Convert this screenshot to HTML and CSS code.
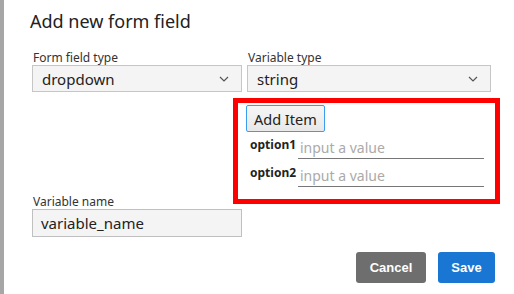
FILE: index.html
```html
<!DOCTYPE html>
<html lang="en">
<head>
  <meta charset="UTF-8">
  <title>Add new form field</title>
  <link rel="stylesheet" href="styles.css">
</head>
<body>
  <div class="dialog">
    <h2 class="title">Add new form field</h2>

    <div class="field-row">
      <div class="field">
        <label class="field-label">Form field type</label>
        <div class="select">
          <span>dropdown</span>
          <svg class="chevron" width="10" height="6" viewBox="0 0 10 6"><path d="M1 1l4 4 4-4" fill="none" stroke="#555" stroke-width="1.2"/></svg>
        </div>
      </div>
      <div class="field">
        <label class="field-label">Variable type</label>
        <div class="select">
          <span>string</span>
          <svg class="chevron" width="10" height="6" viewBox="0 0 10 6"><path d="M1 1l4 4 4-4" fill="none" stroke="#555" stroke-width="1.2"/></svg>
        </div>
      </div>
    </div>

    <div class="items-box">
      <button class="add-btn">Add Item</button>
      <div class="option">
        <span class="option-name">option1</span>
        <input class="option-input" type="text" placeholder="input a value">
      </div>
      <div class="option">
        <span class="option-name">option2</span>
        <input class="option-input" type="text" placeholder="input a value">
      </div>
    </div>

    <div class="field name-field">
      <label class="field-label">Variable name</label>
      <div class="text-input">variable_name</div>
    </div>

    <div class="actions">
      <button class="btn cancel-btn">Cancel</button>
      <button class="btn save-btn">Save</button>
    </div>
  </div>
</body>
</html>
```

FILE: styles.css
```css
body {
  margin: 0;
  font-family: "Noto Sans", "Open Sans", sans-serif;
  color: #222;
  background-color: #fff;
}
.dialog {
  height: 294px;
  box-sizing: border-box;
  border-left: 4px solid #a6a6a6;
  padding: 8px 19px 0 28px;
}
.title {
  margin: 0 0 0 -2px;
  font-size: 18px;
  font-weight: 400;
  line-height: 26px;
  color: #222;
}
.field-row {
  display: flex;
  gap: 5px;
  margin-top: 16px;
}
.field {
  display: flex;
  flex-direction: column;
}
.field-row .field:first-child {
  width: 210px;
}
.field-row .field:last-child {
  width: 244px;
}
.field-label {
  font-size: 12px;
  line-height: 15px;
  color: #333;
  padding-left: 1px;
}
.select {
  display: flex;
  align-items: center;
  justify-content: space-between;
  height: 27px;
  box-sizing: border-box;
  padding: 0 12px 0 9px;
  background-color: #f4f4f4;
  border: 1px solid #c6c6c6;
  font-size: 15px;
}
.items-box {
  width: 267px;
  box-sizing: border-box;
  margin: 6px 0 0 201px;
  border: 5px solid #ff0000;
  padding: 2px 10px 12px 8px;
}
.add-btn {
  height: 27px;
  padding: 0 7px;
  font-family: inherit;
  font-size: 14.5px;
  color: #222;
  background: linear-gradient(#f6f6f6, #e8e8e8);
  border: 1px solid #3c9cf0;
  border-radius: 2px;
}
.option {
  display: flex;
  align-items: flex-start;
  margin-top: 3px;
  padding-left: 4px;
}
.option + .option {
  margin-top: 4px;
}
.option-name {
  width: 48px;
  font-size: 12px;
  font-weight: 700;
  line-height: 20px;
  color: #222;
}
.option-input {
  width: 186px;
  height: 24px;
  box-sizing: border-box;
  padding: 2px 2px 0;
  border: none;
  border-bottom: 1px solid #777;
  font-family: inherit;
  font-size: 14px;
  outline: none;
}
.option-input::placeholder {
  color: #aaa;
}
.name-field {
  width: 210px;
  margin-top: -10px;
}
.text-input {
  height: 28px;
  box-sizing: border-box;
  padding: 0 8px;
  display: flex;
  align-items: center;
  background-color: #f4f4f4;
  border: 1px solid #c0c0c0;
  font-size: 15px;
}
.actions {
  display: flex;
  justify-content: flex-end;
  gap: 12px;
  margin-top: 15px;
}
.btn {
  height: 31px;
  border: none;
  border-radius: 3px;
  font-family: "Liberation Sans", Arial, sans-serif;
  font-size: 13px;
  font-weight: 700;
  color: #fff;
  cursor: pointer;
}
.cancel-btn {
  width: 70px;
  background-color: #6e6e6e;
}
.save-btn {
  width: 57px;
  background-color: #1976d2;
}
```
